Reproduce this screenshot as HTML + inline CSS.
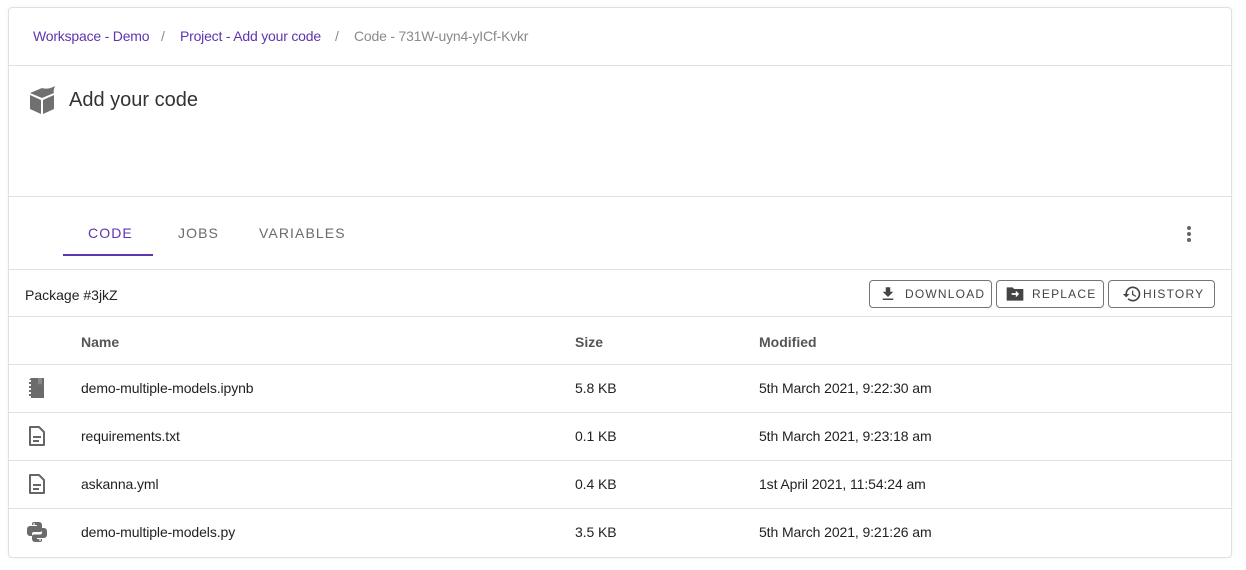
<!DOCTYPE html>
<html><head><meta charset="utf-8"><style>
*{box-sizing:border-box;margin:0;padding:0}
body{width:1246px;height:570px;background:#fff;font-family:"Liberation Sans",sans-serif;color:#222;position:relative;overflow:hidden}
.card{position:absolute;left:8px;top:7px;width:1224px;height:551px;border:1px solid #e0e0e0;border-radius:4px;box-shadow:0 0 3px rgba(0,0,0,.06)}
.hr{position:absolute;left:8px;width:1224px;height:1px;background:#e0e0e0}
.t{position:absolute;white-space:nowrap}
.bc{top:28px;font-size:14px;letter-spacing:-0.2px}
.p{color:#5e35b1}
.g{color:#8a8a8a}
.tab{top:225px;font-size:14px;letter-spacing:1.1px;color:#6b6b6b;font-weight:500}
.btn{position:absolute;top:280px;height:28px;border:1px solid #757575;border-radius:4px;font-size:12px;letter-spacing:1.2px;color:#444;display:flex;align-items:center}
.th{top:334px;font-size:14px;font-weight:bold;color:#555}
.td{font-size:14px;color:#222;letter-spacing:-0.1px}
</style></head><body>
<div class="card"></div>
<div class="t bc p" style="left:33px">Workspace - Demo</div>
<div class="t bc g" style="left:161px">/</div>
<div class="t bc p" style="left:180px">Project - Add your code</div>
<div class="t bc g" style="left:335px">/</div>
<div class="t bc g" style="left:354px">Code - 731W-uyn4-yICf-Kvkr</div>
<div class="hr" style="top:65px"></div>
<svg style="position:absolute;left:28px;top:85px" width="28" height="30" viewBox="0 0 28 30"><path d="M2 8 L14 3 Q20 5 27 1 Q25 6 26 8 L14 13Z" fill="#707070"/><path d="M2 10 L13 15 L13 29 L2 24Z" fill="#707070"/><path d="M15 15 L26 10 L26 24 L15 29Z" fill="#707070"/></svg>
<div class="t" style="left:69px;top:89px;font-size:20px;color:#333">Add your code</div>
<div class="hr" style="top:196px"></div>
<div class="t tab" style="left:88px;color:#5e35b1">CODE</div>
<div class="t tab" style="left:178px">JOBS</div>
<div class="t tab" style="left:259px">VARIABLES</div>
<div style="position:absolute;left:63px;top:254px;width:90px;height:2px;background:#5e35b1"></div>
<div style="position:absolute;left:1187px;top:226px;width:4px;height:4px;border-radius:2px;background:#666;box-shadow:0 6px 0 #666,0 12px 0 #666"></div>
<div class="hr" style="top:269px"></div>
<div class="t" style="left:25px;top:287px;font-size:14px">Package #3jkZ</div>
<div class="btn" style="left:869px;width:123px"><svg style="margin-left:9px" width="18" height="18" viewBox="0 0 24 24"><path d="M5 20h14v-2H5zM19 9h-4V3H9v6H5l7 7z" fill="#444"/></svg><span style="margin-left:8px">DOWNLOAD</span></div>
<div class="btn" style="left:996px;width:108px"><svg style="margin-left:7px" width="22" height="20" viewBox="0 0 24 24"><path d="M2 4h7l2 2h11v14H2z" fill="#444"/><path d="M8 11h5V8l4 4-4 4v-3H8z" fill="#fff"/></svg><span style="margin-left:6px">REPLACE</span></div>
<div class="btn" style="left:1108px;width:107px"><svg style="margin-left:12px" width="22" height="20" viewBox="0 0 24 24"><path d="M13 3a9 9 0 0 0-9 9H1l4 4 4-4H6a7 7 0 1 1 2.05 4.95l-1.42 1.42A9 9 0 1 0 13 3zm-1 5v5l4.25 2.52.77-1.28-3.52-2.09V8z" fill="#444"/></svg><span>HISTORY</span></div>
<div class="hr" style="top:316px"></div>
<div class="t th" style="left:81px">Name</div>
<div class="t th" style="left:575px">Size</div>
<div class="t th" style="left:759px">Modified</div>
<div class="hr" style="top:364px"></div>
<div class="hr" style="top:412px"></div>
<div class="hr" style="top:460px"></div>
<div class="hr" style="top:508px"></div>
<svg style="position:absolute;left:27px;top:377px" width="20" height="22" viewBox="0 0 20 22"><path d="M4 1h13v20H4v-2H2v-2h2v-2H2v-2h2v-2H2V9h2V7H2V5h2V3H2z" fill="#6b6b6b"/><path d="M11 1h4v7l-2-1.5L11 8z" fill="#888"/></svg>
<div class="t td" style="left:81px;top:380px">demo-multiple-models.ipynb</div><div class="t td" style="left:575px;top:380px">5.8 KB</div><div class="t td" style="left:759px;top:380px">5th March 2021, 9:22:30 am</div>
<svg style="position:absolute;left:28px;top:426px" width="18" height="20" viewBox="0 0 18 20"><path d="M2 1h9l5 5v13H2z" fill="none" stroke="#666" stroke-width="2" stroke-linejoin="round"/><path d="M5 11h8M5 15h6" stroke="#666" stroke-width="2"/></svg>
<div class="t td" style="left:81px;top:428px">requirements.txt</div><div class="t td" style="left:575px;top:428px">0.1 KB</div><div class="t td" style="left:759px;top:428px">5th March 2021, 9:23:18 am</div>
<svg style="position:absolute;left:28px;top:474px" width="18" height="20" viewBox="0 0 18 20"><path d="M2 1h9l5 5v13H2z" fill="none" stroke="#666" stroke-width="2" stroke-linejoin="round"/><path d="M5 11h8M5 15h6" stroke="#666" stroke-width="2"/></svg>
<div class="t td" style="left:81px;top:476px">askanna.yml</div><div class="t td" style="left:575px;top:476px">0.4 KB</div><div class="t td" style="left:759px;top:476px">1st April 2021, 11:54:24 am</div>
<svg style="position:absolute;left:26px;top:521px" width="22" height="22" viewBox="0 0 22 22"><path d="M8 1h5a3 3 0 0 1 3 3v5a2 2 0 0 1-2 2H8a2 2 0 0 0-2 2v2H4a3 3 0 0 1-3-3V8a3 3 0 0 1 3-3h7V4H6V3a2 2 0 0 1 2-2z" fill="#6b6b6b"/><path d="M14 21H9a3 3 0 0 1-3-3v-2.5a2 2 0 0 1 2-2h6a2 2 0 0 0 2-2V7h2a3 3 0 0 1 3 3v4a3 3 0 0 1-3 3h-7v1h5v1a2 2 0 0 1-2 2z" fill="#6b6b6b"/><circle cx="8" cy="3" r="0.9" fill="#fff"/><circle cx="14" cy="19" r="0.9" fill="#fff"/></svg>
<div class="t td" style="left:81px;top:524px">demo-multiple-models.py</div><div class="t td" style="left:575px;top:524px">3.5 KB</div><div class="t td" style="left:759px;top:524px">5th March 2021, 9:21:26 am</div>
</body></html>
